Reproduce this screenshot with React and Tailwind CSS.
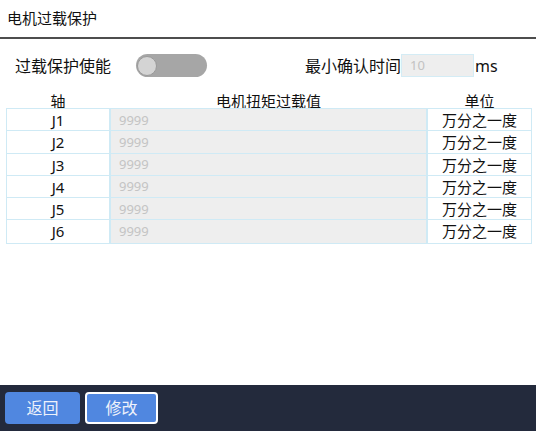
import React, { useState } from 'react';

const joints = ['J1', 'J2', 'J3', 'J4', 'J5', 'J6'];

export default function App() {
    const [enabled, setEnabled] = useState(false);

    return (
        <div
            className="w-[536px] h-[431px] flex flex-col bg-white text-[#111]"
            style={{ fontFamily: '"Noto Sans", "Noto Sans CJK SC", sans-serif' }}
        >
            <div className="h-[37px] flex items-center pl-[7px] text-[15px]">电机过载保护</div>
            <div className="h-[2px] bg-[#4d4d4d]"></div>

            <div className="h-[51px] flex items-center pt-[2px]">
                <div className="pl-[15px] w-[136px] text-[16px]">过载保护使能</div>
                <button
                    onClick={() => setEnabled(!enabled)}
                    className="w-[71px] h-[23px] rounded-full bg-[#a6a6a6] flex items-center px-[1px]"
                >
                    <span className="w-[20px] h-[20px] rounded-full bg-[#d4d4d4] border border-[#9a9a9a]"></span>
                </button>
                <div className="ml-[98px] w-[96px] text-[16px]">最小确认时间</div>
                <div className="w-[73px] h-[23px] bg-[#eeeeee] border border-[#d4ecf5] flex items-center pl-[8px] text-[13px] text-[#c2c2c2]">
                    10
                </div>
                <div className="ml-[1px] text-[16px]">ms</div>
            </div>

            <div className="px-[6px]">
                <div className="grid grid-cols-[104px_317px_105px] h-[18px] items-center text-[15px] text-center">
                    <div>轴</div>
                    <div>电机扭矩过载值</div>
                    <div>单位</div>
                </div>
                <div>
                    {joints.map((j) => (
                        <div key={j} className="grid grid-cols-[104px_317px_105px] h-[22.3px]">
                            <div className="border border-[#cfeaf5] bg-white flex items-center justify-center text-[15px]">
                                {j}
                            </div>
                            <div className="border border-[#cfeaf5] bg-[#eeeeee] flex items-center pl-[8px] text-[13px] text-[#c4c4c4]">
                                9999
                            </div>
                            <div className="border border-[#cfeaf5] bg-white flex items-center justify-center text-[15px]">
                                万分之一度
                            </div>
                        </div>
                    ))}
                </div>
            </div>

            <div className="flex-1"></div>

            <div className="h-[46px] bg-[#232a3c] flex items-center pl-[5px] gap-[5px]">
                <button className="w-[75px] h-[32px] rounded-[4px] bg-[#5087e0] text-[16px] text-[#eef2fb]">
                    返回
                </button>
                <button className="w-[73px] h-[32px] rounded-[4px] bg-[#5087e0] border-2 border-white text-[16px] text-[#eef2fb]">
                    修改
                </button>
            </div>
        </div>
    );
}
